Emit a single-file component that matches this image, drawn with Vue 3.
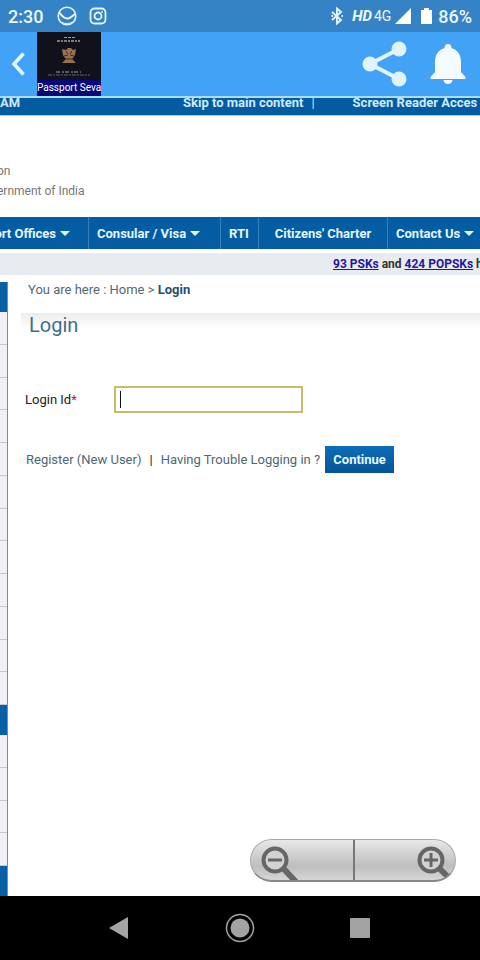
<script setup>
import { ref } from 'vue'

const loginId = ref('')

const menu = [
  { label: 'ort Offices', drop: true, cls: 'nav-offices' },
  { label: 'Consular / Visa', drop: true, cls: 'nav-consular' },
  { label: 'RTI', drop: false, cls: 'nav-rti' },
  { label: "Citizens' Charter", drop: false, cls: 'nav-charter' },
  { label: 'Contact Us', drop: true, cls: 'nav-contact' },
]

// side menu groups: a blue heading followed by plain rows
const sideGroups = [{ rows: 12 }, { rows: 4 }, { rows: 0 }]
</script>

<template>
  <div class="screen">
    <div class="status-bar">
      <span class="clock">2:30</span>
      <svg class="st-app" viewBox="0 0 20 20" width="20" height="20" fill="none" stroke="#e3f6fb" stroke-width="1.6">
        <circle cx="10" cy="10" r="8.8" />
        <path d="M2 6C4 9 7 13 11 12.500C14.500 12 16 8.500 18.500 8" stroke-width="2" />
        <path d="M5 16.500C8 18 13 18 15.500 16" stroke-width="1" />
      </svg>
      <svg class="st-insta" viewBox="0 0 18 18" width="18" height="18" fill="none" stroke="#e3f6fb" stroke-width="1.800">
        <rect x="1.500" y="1.500" width="15" height="15" rx="4" />
        <circle cx="9" cy="9" r="3.500" />
        <circle cx="13" cy="5" r="0.600" fill="#e3f6fb" stroke-width="0.800" />
      </svg>
      <div class="status-right">
        <svg viewBox="0 0 14 18" width="14" height="18" fill="none" stroke="#e3f6fb" stroke-width="1.900">
          <path d="M2 5L11 13L7 16.500V1.500L11 5L2 13" />
          <path d="M1.500 9H3M11.500 9H13" />
        </svg>
        <span class="hd">HD</span>
        <span class="net">4G</span>
        <svg class="signal" viewBox="0 0 16 16" width="16" height="16"><path d="M0 16L16 0V16Z" fill="#fff" /></svg>
        <svg class="battery" viewBox="0 0 11 16" width="11" height="16"><path d="M0 2H3V0H8V2H11V16H0Z" fill="#fff" /></svg>
        <span class="percent">86%</span>
      </div>
    </div>

    <header class="app-bar">
      <button class="icon-btn back" aria-label="Back">
        <svg viewBox="0 0 14 26" width="14" height="26"><path d="M12.500 2.500L3 13L12.500 23.500" fill="none" stroke="#e4f7fc" stroke-width="3.600" /></svg>
      </button>
      <div class="logo">
        <svg viewBox="0 0 64 48" width="64" height="48">
          <rect width="64" height="48" fill="#11111b" />
          <g fill="none" stroke="#a29ba0">
            <path d="M27 5.500H38" stroke-width="1.200" stroke-dasharray="3 1" />
            <path d="M20 9H43" stroke-width="1.600" stroke-dasharray="3 1 2 1" />
            <path d="M19 40H44" stroke-width="1.200" stroke-dasharray="4 2 2 1" />
            <path d="M11 43H53" stroke="#66606a" stroke-width="1" stroke-dasharray="4 1 2 1" />
          </g>
          <g fill="#98714f">
            <path d="M25 17L29 18L31 16H34L36 18L39 17L38 23L36 26H28L26 23Z" />
            <path d="M29 25H35L36 28L39 31H25L28 28Z" />
          </g>
          <path d="M29 19L31 22M35 19L33 22M28 27H36M27 24L31 23M37 24L33 23" stroke="#3b2c2a" fill="none" />
        </svg>
        <span class="logo-text">Passport Seva</span>
      </div>
      <div class="app-actions">
        <button class="icon-btn" aria-label="Share">
          <svg viewBox="0 0 45 46" width="45" height="46" fill="#e0f4ff">
            <path d="M37 8L8 23L37 38" fill="none" stroke="#e0f4ff" stroke-width="4" />
            <circle cx="37" cy="8" r="7.500" /><circle cx="8" cy="23" r="7.500" /><circle cx="37" cy="38" r="7.500" />
          </svg>
        </button>
        <button class="icon-btn" aria-label="Notifications">
          <svg viewBox="0 0 36 42" width="36" height="42" fill="#f4fbff">
            <path d="M18 1C16 1 14.500 2.500 14.500 5C8 7 5 12 5 19V29L0.500 34V36H35.500V34L31 29V19C31 12 28 7 21.500 5C21.500 2.500 20 1 18 1Z" />
            <path d="M13.500 37H22.500C22 40 20 41 18 41S14 40 13.500 37Z" />
          </svg>
        </button>
      </div>
    </header>

    <div class="top-strip">
      <span class="strip-time">AM</span>
      <a href="#login" class="strip-skip">Skip to main content</a>
      <span class="strip-sep">|</span>
      <a href="#reader">Screen Reader Acces</a>
    </div>

    <div class="gov">
      <div>on</div>
      <div>ernment of India</div>
    </div>

    <nav class="main-nav">
      <a v-for="m in menu" :key="m.label" href="#" :class="m.cls">
        {{ m.label }}<span v-if="m.drop" class="arrow"></span>
      </a>
    </nav>

    <div class="notice">
      <a href="#psk">93 PSKs</a> and <a href="#popsk">424 POPSKs</a> h
    </div>

    <div class="body">
      <aside class="side">
        <template v-for="(g, i) in sideGroups" :key="i">
          <div class="side-head"></div>
          <div v-for="n in g.rows" :key="n" class="side-row"></div>
        </template>
      </aside>

      <main id="login" class="content">
        <div class="crumbs">You are here : <a href="#">Home</a> &gt; <b>Login</b></div>
        <h1>Login</h1>
        <form @submit.prevent>
          <div class="field">
            <label for="login-id">Login Id<span class="req">*</span></label>
            <div class="input-wrap">
              <input id="login-id" v-model="loginId" type="text" />
              <span v-if="!loginId" class="caret"></span>
            </div>
          </div>
          <div class="links">
            <a href="#register">Register (New User)</a>
            <span class="bar">|</span>
            <a href="#trouble">Having Trouble Logging in ?</a>
            <button type="submit" class="continue">Continue</button>
          </div>
        </form>
      </main>

      <!-- floating zoom control -->
      <div class="zoom">
        <button aria-label="Zoom out">
          <svg viewBox="0 0 40 34" width="40" height="34" fill="none" stroke="#666">
            <path d="M24 22L37 36" stroke-width="6" />
            <circle cx="16" cy="14" r="11.500" fill="#d2d2d2" stroke-width="4" />
            <path d="M9 14H23" stroke-width="3" />
          </svg>
        </button>
        <button aria-label="Zoom in">
          <svg viewBox="0 0 40 34" width="40" height="34" fill="none" stroke="#666">
            <path d="M24 22L33 31" stroke-width="6" />
            <circle cx="16" cy="14" r="11.500" fill="#d2d2d2" stroke-width="4" />
            <path d="M9 14H23M16 7V21" stroke-width="3" />
          </svg>
        </button>
      </div>
    </div>

    <footer class="sys-nav">
      <button class="icon-btn" aria-label="System back">
        <svg viewBox="0 0 22 24" width="22" height="24"><path d="M1 12L20 1V23Z" fill="#a3a3a3" /></svg>
      </button>
      <button class="icon-btn" aria-label="Home">
        <svg viewBox="0 0 30 30" width="30" height="30">
          <circle cx="15" cy="15" r="13.500" fill="none" stroke="#a3a3a3" stroke-width="1.500" />
          <circle cx="15" cy="15" r="9.500" fill="#a3a3a3" />
        </svg>
      </button>
      <button class="icon-btn" aria-label="Recent apps">
        <svg viewBox="0 0 22 22" width="22" height="22"><rect x="1" y="1" width="20" height="20" rx="1" fill="#a3a3a3" /></svg>
      </button>
    </footer>
  </div>
</template>

<style>
body { margin: 0; background: #fff; }
</style>

<style scoped>
.screen {
  display: flex;
  flex-direction: column;
  min-height: 100vh;
  overflow: hidden;
  font-family: Roboto, "Liberation Sans", sans-serif;
  font-size: 13px;
  color: #333;
}
.screen * { box-sizing: border-box; }
a { color: inherit; text-decoration: none; }
svg { display: block; }
button { font-family: inherit; cursor: pointer; }
.icon-btn { padding: 0; border: none; background: none; }

/* Status bar */
.status-bar {
  display: flex;
  align-items: center;
  height: 32px;
  padding: 0 8px;
  background: #3583c4;
  color: #e9f9fc;
}
.clock { font-size: 18px; font-weight: 500; }
.st-app { margin-left: 14px; }
.st-insta { margin-left: 12px; }
.status-right { display: flex; align-items: center; margin-left: auto; }
.hd { margin-left: 8px; font-size: 15px; font-weight: 700; font-style: italic; }
.net { margin-left: 2px; font-size: 14px; }
.signal { margin-left: 4px; }
.battery { margin-left: 10px; }
.percent { margin-left: 6px; font-size: 18px; font-weight: 500; }

/* App bar */
.app-bar {
  display: flex;
  align-items: center;
  height: 66px;
  padding: 0 14px 0 11px;
  background: #42a3f6;
  border-bottom: 2px solid #aedcf5;
}
.logo { margin-left: 12px; width: 64px; }
.logo-text {
  display: block;
  height: 16px;
  line-height: 16px;
  background: #08087b;
  color: #fff;
  font-size: 10px;
  text-align: center;
  white-space: nowrap;
}
.app-actions { display: flex; align-items: center; gap: 23px; margin-left: auto; }

/* Accessibility strip */
.top-strip {
  display: flex;
  height: 18px;
  line-height: 9px;
  background: #045ca0;
  color: #cfeafa;
  font-size: 13px;
  font-weight: 700;
  white-space: nowrap;
  overflow: hidden;
  border-bottom: 1px solid #9cd3ea;
}
.strip-time { width: 183px; }
.strip-sep { margin: 0 38px 0 8px; font-weight: 400; }

.gov { height: 101px; margin-left: -3px; padding-top: 45px; line-height: 20px; font-size: 12px; color: #777; }

/* Main menu */
.main-nav {
  display: flex;
  height: 32px;
  background: #045ca3;
  color: #e4f6ff;
  font-size: 13px;
  font-weight: 700;
  white-space: nowrap;
}
.main-nav a {
  display: flex;
  flex-shrink: 0;
  align-items: center;
  padding: 0 8px;
  border-right: 1px solid #3a80b8;
}
.main-nav a:last-child { border-right: none; }
.main-nav .nav-offices { width: 89px; padding: 0 18px 0 0; justify-content: flex-end; }
.nav-consular { width: 132px; }
.nav-rti { width: 38px; }
.nav-charter { width: 129px; justify-content: center; }
.arrow {
  margin-left: 4px;
  border: 5px solid transparent;
  border-top-color: #e4f6ff;
  border-bottom: none;
}

.notice {
  height: 22px;
  margin-top: 4px;
  padding-left: 333px;
  line-height: 22px;
  background: #e8ecf1;
  font-size: 12px;
  font-weight: 700;
  white-space: nowrap;
  overflow: hidden;
}
.notice a { color: #2416a0; text-decoration: underline; }

/* Body */
.body { position: relative; display: flex; flex: 1; padding-top: 7px; }
.side {
  display: flex;
  flex-direction: column;
  flex-shrink: 0;
  width: 8px;
  border-right: 1px solid #7f8b99;
  background: #f2f0f6;
}
.side-head { flex: none; height: 30px; background: #0a60a6; }
.side-row { flex: 1; min-height: 24px; border-bottom: 1px solid #c6c8d2; }
.content { flex: 1; min-width: 0; padding-left: 13px; }
.crumbs { height: 31px; padding-left: 7px; line-height: 16px; color: #526975; }
.crumbs b { color: #235170; font-weight: 700; }
h1 {
  margin: 0;
  height: 60px;
  padding-left: 8px;
  background: linear-gradient(#ececec, #fff 16px);
  color: #416d8c;
  font-size: 20px;
  line-height: 24px;
  font-weight: 400;
}
.field { display: flex; align-items: center; margin-top: 13px; padding-left: 4px; }
label { width: 89px; color: #222; }
.req { color: #c0202a; }
.input-wrap { position: relative; width: 189px; }
input {
  display: block;
  width: 100%;
  height: 27px;
  padding: 0 5px;
  border: 2px solid #c5bc6c;
  background: #fff;
  font-family: inherit;
  font-size: 13px;
  outline: none;
}
.caret { position: absolute; left: 6px; top: 5px; width: 1px; height: 17px; background: #111; }
.input-wrap:focus-within .caret { display: none; }
.links {
  display: flex;
  align-items: center;
  margin-top: 33px;
  padding-left: 5px;
  color: #4a6977;
  white-space: nowrap;
}
.bar { margin: 0 8px; color: #222; }
.continue {
  width: 69px;
  height: 27px;
  margin-left: 5px;
  padding: 0;
  border: none;
  background: linear-gradient(#0d6db7, #055596);
  color: #e8f7ff;
  font-size: 13px;
  font-weight: 700;
}

/* Zoom control */
.zoom {
  position: absolute;
  right: 24px;
  bottom: 14px;
  display: flex;
  width: 206px;
  height: 43px;
  border: 1px solid #aaa;
  border-bottom: 2px solid #888;
  border-radius: 22px;
  background: linear-gradient(#e8e8e8, #bebebe 65%, #d6d6d6);
  overflow: hidden;
}
.zoom button {
  display: flex;
  width: 50%;
  align-items: flex-end;
  padding: 0 8px;
  border: none;
  background: none;
}
.zoom button + button { justify-content: flex-end; padding-right: 0; border-left: 2px solid #777; }

/* System navigation */
.sys-nav {
  display: flex;
  align-items: center;
  justify-content: space-between;
  height: 64px;
  padding: 0 109px 0 108px;
  background: #000;
}
</style>
